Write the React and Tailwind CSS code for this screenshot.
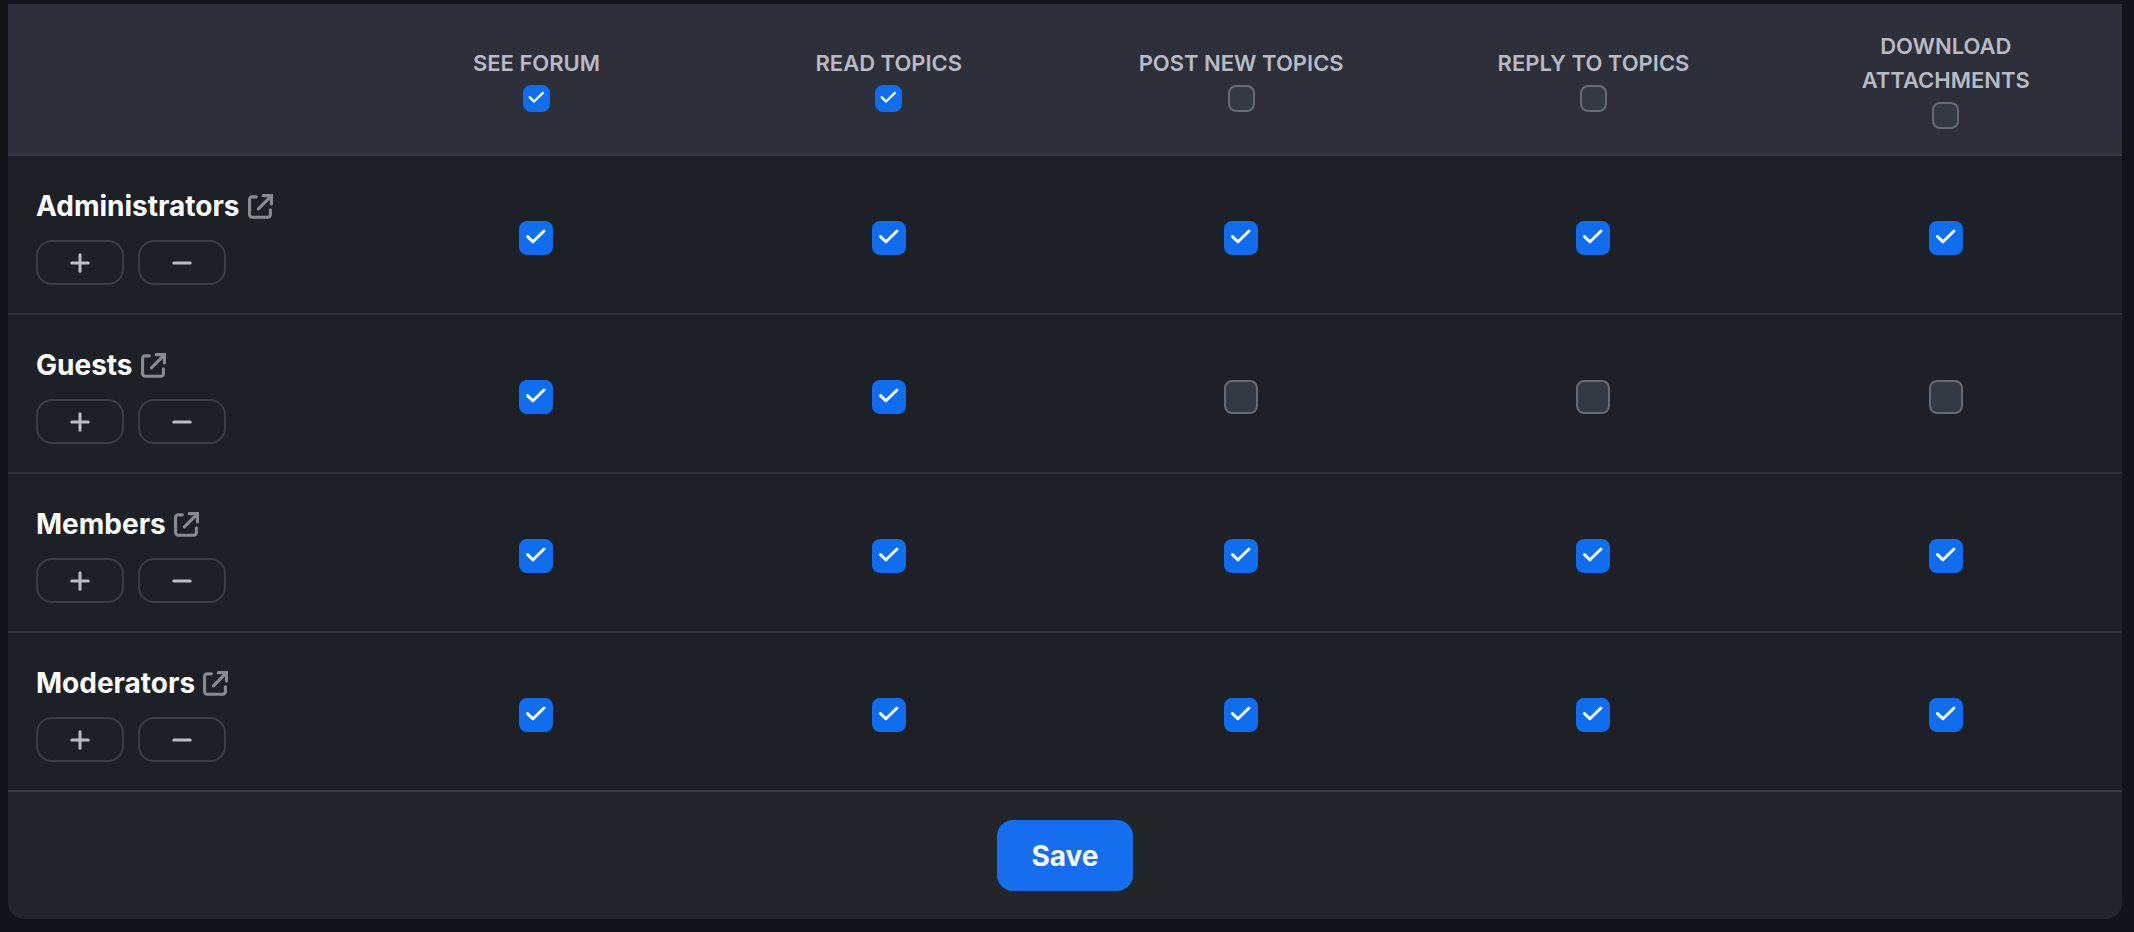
import { useState } from "react";

const permissions = [
  "See Forum",
  "Read Topics",
  "Post New Topics",
  "Reply to Topics",
  "Download Attachments",
];

const initialGroups = [
  { name: "Administrators", allowed: [true, true, true, true, true] },
  { name: "Guests", allowed: [true, true, false, false, false] },
  { name: "Members", allowed: [true, true, true, true, true] },
  { name: "Moderators", allowed: [true, true, true, true, true] },
];

function ExternalIcon() {
  return (
    <svg viewBox="0 0 24 24" className="w-[25px] h-[25px]" fill="none" stroke="currentColor" strokeWidth="3" strokeLinecap="round" strokeLinejoin="round" aria-hidden="true">
      <path d="M8 2.7H4a2.5 2.5 0 0 0-2.5 2.5v14.6A2.5 2.5 0 0 0 4 22.3h15a2.5 2.5 0 0 0 2.5-2.5v-4.6" />
      <path d="M10 14.2 22 2.2" />
      <path d="M14.6 1.6h7.9v7.9" strokeLinejoin="miter" />
    </svg>
  );
}

function Checkbox({ label, checked, onChange, small }) {
  const size = small ? "w-[27px] h-[27px]" : "w-[34px] h-[34px]";

  return (
    <label className={`inline-grid align-top ${size}`}>
      <input
        type="checkbox"
        aria-label={label}
        checked={checked}
        onChange={onChange}
        className="peer col-start-1 row-start-1 w-full h-full appearance-none rounded-[8px] border-2 border-[#666b73] bg-[#343a43] checked:border-[#0f6df0] checked:bg-[#0f6df0] cursor-pointer"
      />
      <svg
        viewBox="0 0 34 34"
        className="col-start-1 row-start-1 w-full h-full pointer-events-none opacity-0 peer-checked:opacity-100"
        fill="none"
        stroke="#fff"
        strokeWidth="3"
        strokeLinecap="round"
        strokeLinejoin="round"
        aria-hidden="true"
      >
        <path d="M8.5 15.6 14 20.8 25 10" />
      </svg>
    </label>
  );
}

function ToggleButton({ label, plus, onClick }) {
  return (
    <button
      type="button"
      aria-label={label}
      onClick={onClick}
      className="flex items-center justify-center w-[88px] h-[45px] rounded-2xl border-2 border-[#3b3e43] text-[#b9bdc4] cursor-pointer"
    >
      <svg viewBox="0 0 20 20" className="w-5 h-5" fill="none" stroke="currentColor" strokeWidth="3" strokeLinecap="round" aria-hidden="true">
        <path d="M1.8 10h16.4" />
        {plus && <path d="M10 1.8v16.4" />}
      </svg>
    </button>
  );
}

export default function App() {
  const [columns, setColumns] = useState([true, true, false, false, false]);
  const [groups, setGroups] = useState(initialGroups);

  const toggleColumn = (col) => {
    const value = !columns[col];
    setColumns(columns.map((c, i) => (i === col ? value : c)));
    setGroups(groups.map((g) => ({ ...g, allowed: g.allowed.map((a, i) => (i === col ? value : a)) })));
  };

  const toggleCell = (row, col) => {
    setGroups(
      groups.map((g, r) =>
        r === row ? { ...g, allowed: g.allowed.map((a, i) => (i === col ? !a : a)) } : g
      )
    );
  };

  const setRow = (row, value) => {
    setGroups(groups.map((g, r) => (r === row ? { ...g, allowed: g.allowed.map(() => value) } : g)));
  };

  return (
    <div className="min-h-screen bg-[#111519] pt-1 pl-2 pr-3 font-['Inter',sans-serif]">
      <form onSubmit={(e) => e.preventDefault()} className="overflow-hidden rounded-b-2xl bg-[#22262a]">
        <table className="w-full table-fixed border-separate border-spacing-0">
          <thead className="bg-[#2d2f39]">
            <tr>
              <td className="border-b-2 border-[#363940]"></td>
              {permissions.map((name, col) => (
                <th key={name} scope="col" className="border-b-2 border-[#363940] px-12 py-[25px] text-center align-middle">
                  <div className="px-4 mb-[5px] text-[22px] leading-[34px] font-semibold uppercase text-[#b9bbc4]">
                    {name}
                  </div>
                  <div className="flex justify-center">
                    <Checkbox small label={`${name} for all groups`} checked={columns[col]} onChange={() => toggleColumn(col)} />
                  </div>
                </th>
              ))}
            </tr>
          </thead>

          <tbody className="bg-[#1d2027]">
            {groups.map((group, row) => (
              <tr key={group.name} className="group">
                <th scope="row" className="border-b-2 border-[#2f3238] group-last:border-[#363940] px-7 py-7 text-left">
                  <div className="flex items-center gap-2 mb-3 text-[28px] leading-[44px] font-bold text-white">
                    {group.name}
                    <a href="#" aria-label={`Open ${group.name}`} className="text-[#868b93]">
                      <ExternalIcon />
                    </a>
                  </div>
                  <div className="flex gap-[14px]">
                    <ToggleButton plus label={`Allow all for ${group.name}`} onClick={() => setRow(row, true)} />
                    <ToggleButton label={`Remove all for ${group.name}`} onClick={() => setRow(row, false)} />
                  </div>
                </th>
                {group.allowed.map((allowed, col) => (
                  <td key={col} className="border-b-2 border-[#2f3238] group-last:border-[#363940] pt-[6px] text-center align-middle">
                    <Checkbox
                      label={`${group.name}: ${permissions[col]}`}
                      checked={allowed}
                      onChange={() => toggleCell(row, col)}
                    />
                  </td>
                ))}
              </tr>
            ))}
          </tbody>
        </table>

        <div className="flex justify-center py-7">
          <button type="submit" className="rounded-2xl bg-[#146eed] px-[34px] pt-4 pb-[14px] text-[28px] leading-[41px] font-bold text-white cursor-pointer">
            Save
          </button>
        </div>
      </form>
    </div>
  );
}
